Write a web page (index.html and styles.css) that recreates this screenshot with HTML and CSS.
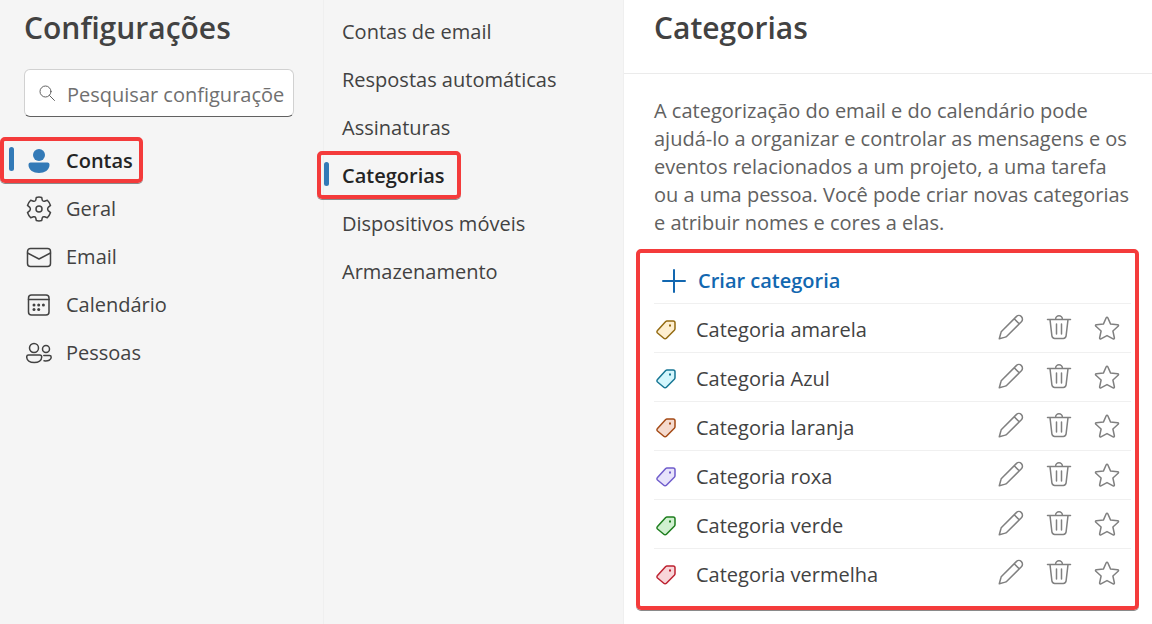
FILE: index.html
```
<!DOCTYPE html>
<html lang="pt-BR">
<head>
    <meta charset="utf-8">
    <meta name="viewport" content="width=device-width, initial-scale=1">
    <title>Configurações</title>
    <link rel="stylesheet" href="styles.css">
</head>
<body>
    <svg class="sprite" aria-hidden="true">
        <symbol id="tag" viewBox="0 0 20 20">
            <path d="M11 1h6.200a1.800 1.800 0 0 1 1.800 1.800v5.700c0 .7-.3 1.300-.7 1.800l-7.900 8a1.800 1.800 0 0 1-2.600 0l-6.300-5.300a1.700 1.700 0 0 1 0-2.500l8.200-8.900c.3-.4.800-.6 1.300-.6z"/>
            <rect class="dot" x="13" y="4.500" width="2" height="2"/>
        </symbol>
        <symbol id="pencil" viewBox="0 0 26 26">
            <path d="M18.300 2.600a3.600 3.600 0 0 1 5.100 5.100L8.800 22.300c-.4.400-.9.700-1.500.8L1.300 24.700l1.600-6c.1-.5.400-1 .8-1.400zM16.200 4.800l5 5"/>
        </symbol>
        <symbol id="trash" viewBox="0 0 26 26">
            <path d="M1.500 5.500h23M9.600 5.200a3.400 3.400 0 0 1 6.800 0M4 5.700l1.900 16.200a2.900 2.900 0 0 0 2.800 2.500h8.600a2.900 2.900 0 0 0 2.800-2.500L22 5.700M10.500 10v10M15.500 10v10"/>
        </symbol>
        <symbol id="star" viewBox="0 0 26 26">
            <path d="M12.200 2.800a.9.9 0 0 1 1.600 0l2.800 6.300 7 .7a.8.8 0 0 1 .5 1.500l-5.200 4.700 1.500 7a.9.9 0 0 1-1.300.9L13 20.600l-6.100 3.300a.9.9 0 0 1-1.300-.9l1.500-7-5.200-4.700a.8.8 0 0 1 .5-1.500l7-.7z"/>
        </symbol>
    </svg>

    <div class="settings">
        <aside class="sidebar">
            <h1>Configurações</h1>
            <label class="search">
                <svg viewBox="0 0 16 16"><circle cx="6.500" cy="6.500" r="5.500"/><path d="M10.500 10.500l5 5"/></svg>
                <input type="text" aria-label="Pesquisar configurações" placeholder="Pesquisar configuraçõe">
            </label>
            <nav class="menu">
                <a href="#contas" class="active">
                    <svg class="person" viewBox="0 0 26 26"><circle cx="13" cy="7" r="6"/><path d="M4.500 14.500h17a2 2 0 0 1 2 2v.5c0 5-5 8-10.500 8S2.500 22 2.500 17v-.5a2 2 0 0 1 2-2z"/></svg>
                    Contas
                </a>
                <a href="#geral">
                    <svg viewBox="0 0 26 26"><circle cx="13" cy="13" r="3"/><path d="M10.300 1.500Q13 .7 15.700 1.500L16.300 4.300Q16.900 5.600 18.500 5.200L21.300 4.200Q23.500 6.300 24.500 9.400L22.200 11.400Q21.100 13 22.200 14.600L24.500 16.600Q23.500 19.700 21.300 21.800L18.500 20.800Q16.900 20.400 16.300 21.700L15.700 24.500Q13 25.300 10.300 24.500L9.700 21.700Q9.100 20.400 7.500 20.800L4.700 21.800Q2.500 19.700 1.500 16.600L3.800 14.600Q4.900 13 3.800 11.400L1.500 9.400Q2.500 6.300 4.700 4.200L7.500 5.200Q9.100 5.600 9.700 4.300z"/></svg>
                    Geral
                </a>
                <a href="#email">
                    <svg viewBox="0 0 26 26"><rect x="1.500" y="4.500" width="23" height="18" rx="3"/><path d="M1.500 9L13 15l11.500-6"/></svg>
                    Email
                </a>
                <a href="#calendario">
                    <svg viewBox="0 0 26 26"><rect x="2.500" y="3" width="20.500" height="20" rx="3"/><path d="M2.500 7.500H23"/><g class="dots"><circle cx="8" cy="13" r="1.500"/><circle cx="12.700" cy="13" r="1.500"/><circle cx="17.400" cy="13" r="1.500"/><circle cx="8" cy="17.500" r="1.500"/><circle cx="12.700" cy="17.500" r="1.500"/></g></svg>
                    Calendário
                </a>
                <a href="#pessoas">
                    <svg viewBox="0 0 26 26"><circle cx="8" cy="8" r="4.500"/><circle cx="20" cy="9" r="3.500"/><path d="M2.500 15h11.200a2 2 0 0 1 2 2c0 3.500-3.200 5.500-7.500 5.500S.700 20.500.7 17a2 2 0 0 1 1.800-2zM17.800 15.500h5.700a1.700 1.700 0 0 1 1.700 1.700c0 2.800-3 4-7.200 3.600"/></svg>
                    Pessoas
                </a>
            </nav>
        </aside>

        <nav class="menu submenu">
            <a href="#contas-email">Contas de email</a>
            <a href="#respostas">Respostas automáticas</a>
            <a href="#assinaturas">Assinaturas</a>
            <a href="#categorias" class="active">Categorias</a>
            <a href="#dispositivos">Dispositivos móveis</a>
            <a href="#armazenamento">Armazenamento</a>
        </nav>

        <main>
            <header>
                <h2>Categorias</h2>
            </header>
            <p class="intro">A categorização do email e do calendário pode ajudá-lo a organizar e controlar as mensagens e os eventos relacionados a um projeto, a uma tarefa<br>ou a uma pessoa. Você pode criar novas categorias e atribuir nomes e cores a elas.</p>
            <section class="categories">
                <button class="create">
                    <svg viewBox="0 0 24 24"><path d="M12 1v22M1 12h22"/></svg>
                    Criar categoria
                </button>
                <ul>
                    <li>
                        <svg class="tag yellow"><use href="#tag"/></svg>
                        <span>Categoria amarela</span>
                        <button aria-label="Editar"><svg><use href="#pencil"/></svg></button>
                        <button aria-label="Excluir"><svg><use href="#trash"/></svg></button>
                        <button aria-label="Favorito" class="fav"><svg><use href="#star"/></svg></button>
                    </li>
                    <li>
                        <svg class="tag blue"><use href="#tag"/></svg>
                        <span>Categoria Azul</span>
                        <button aria-label="Editar"><svg><use href="#pencil"/></svg></button>
                        <button aria-label="Excluir"><svg><use href="#trash"/></svg></button>
                        <button aria-label="Favorito" class="fav"><svg><use href="#star"/></svg></button>
                    </li>
                    <li>
                        <svg class="tag orange"><use href="#tag"/></svg>
                        <span>Categoria laranja</span>
                        <button aria-label="Editar"><svg><use href="#pencil"/></svg></button>
                        <button aria-label="Excluir"><svg><use href="#trash"/></svg></button>
                        <button aria-label="Favorito" class="fav"><svg><use href="#star"/></svg></button>
                    </li>
                    <li>
                        <svg class="tag purple"><use href="#tag"/></svg>
                        <span>Categoria roxa</span>
                        <button aria-label="Editar"><svg><use href="#pencil"/></svg></button>
                        <button aria-label="Excluir"><svg><use href="#trash"/></svg></button>
                        <button aria-label="Favorito" class="fav"><svg><use href="#star"/></svg></button>
                    </li>
                    <li>
                        <svg class="tag green"><use href="#tag"/></svg>
                        <span>Categoria verde</span>
                        <button aria-label="Editar"><svg><use href="#pencil"/></svg></button>
                        <button aria-label="Excluir"><svg><use href="#trash"/></svg></button>
                        <button aria-label="Favorito" class="fav"><svg><use href="#star"/></svg></button>
                    </li>
                    <li>
                        <svg class="tag red"><use href="#tag"/></svg>
                        <span>Categoria vermelha</span>
                        <button aria-label="Editar"><svg><use href="#pencil"/></svg></button>
                        <button aria-label="Excluir"><svg><use href="#trash"/></svg></button>
                        <button aria-label="Favorito" class="fav"><svg><use href="#star"/></svg></button>
                    </li>
                </ul>
            </section>
        </main>
    </div>
</body>
</html>
```
FILE: styles.css
```
* {
    box-sizing: border-box;
}
body {
    margin: 0;
    font-family: "Open Sans", "Noto Sans", sans-serif;
    font-size: 20px;
    line-height: 28px;
    color: #424242;
    background: #fff;
}
h1, h2 {
    margin: 0;
    font-size: 30px;
    line-height: 40px;
    font-weight: 600;
}
svg {
    flex: none;
    fill: none;
    stroke: currentColor;
    stroke-width: 1.5;
    stroke-linejoin: round;
    stroke-linecap: round;
}
.sprite {
    display: none;
}
.settings {
    display: grid;
    grid-template-columns: 324px 300px 1fr;
    min-height: 100vh;
}

/* left column */
.sidebar {
    padding-top: 8px;
    background: #f5f5f5;
    border-right: 1px solid #efefef;
}
.sidebar h1 {
    margin-left: 24px;
}
.search {
    display: flex;
    align-items: center;
    gap: 12px;
    height: 48px;
    margin: 21px 29px 20px 24px;
    padding: 0 8px 0 14px;
    background: #fff;
    border: 1px solid #d1d1d1;
    border-bottom-color: #616161;
    border-radius: 6px;
}
.search svg {
    width: 16px;
    height: 16px;
    color: #616161;
    stroke-width: 1;
}
.search input {
    flex: 1;
    min-width: 0;
    padding: 3px 0 0;
    border: 0;
    outline: 0;
    background: none;
    font: inherit;
}
.search input::placeholder {
    color: #707070;
}
.menu a {
    position: relative;
    display: flex;
    align-items: center;
    gap: 14px;
    height: 48px;
    padding-left: 26px;
    color: #424242;
    text-decoration: none;
}
.menu svg {
    width: 26px;
    height: 26px;
}
.menu .active {
    width: fit-content;
    color: #242424;
    font-weight: 600;
}
.menu .active::before {
    content: "";
    position: absolute;
    left: 9px;
    top: 10px;
    width: 5px;
    height: 24px;
    border-radius: 3px;
    background: #337ab7;
}
.menu .active::after {
    content: "";
    position: absolute;
    inset: 0 -10px 2px 0;
    border: 4px solid #f43b3b;
    border-radius: 5px;
    box-shadow: 0 1px 0 #8a8a8a;
}
.menu .person {
    fill: #337ab7;
    stroke: none;
}
.dots {
    fill: currentColor;
    stroke: none;
}

/* middle column */
.submenu {
    padding-top: 8px;
    background: #f5f5f5;
    border-right: 1px solid #efefef;
}
.submenu a {
    padding-left: 18px;
}
.submenu .active::before {
    left: 0;
}
.submenu .active::after {
    inset: -1px -16px 1px -7px;
}

/* content */
header {
    padding: 8px 30px 25px;
    border-bottom: 1px solid #ebebeb;
}
.intro {
    margin: 23px 12px 12px 30px;
    color: #616161;
}
.categories {
    margin: 0 13px 14px 12px;
    padding: 4px 4px 9px 14px;
    border: 4px solid #f43b3b;
    border-radius: 5px;
    box-shadow: 0 1px 0 #8a8a8a;
}
.categories button {
    display: flex;
    align-items: center;
    justify-content: center;
    width: 48px;
    height: 48px;
    padding: 0 0 2px;
    border: 0;
    background: none;
    font: inherit;
    color: #808080;
    cursor: pointer;
}
.categories button svg {
    width: 26px;
    height: 26px;
}
.categories .create {
    width: auto;
    height: 46px;
    gap: 12px;
    padding: 2px 8px 0;
    color: #1267b0;
    font-weight: 600;
}
.categories .create svg {
    width: 24px;
    height: 24px;
    stroke-width: 2;
}
.categories ul {
    margin: 0;
    padding: 0;
    list-style: none;
}
.categories li {
    display: flex;
    align-items: center;
    height: 49px;
    border-top: 1px solid #f0f0f0;
}
.categories li span {
    flex: 1;
    padding: 3px 0 0 20px;
}
.categories .fav {
    padding-bottom: 0;
}
.tag {
    width: 20px;
    height: 20px;
    margin: 4px 0 0 2px;
}
.dot {
    fill: currentColor;
    stroke: none;
}
.yellow {
    color: #946b12;
    fill: #feefd0;
}
.blue {
    color: #167694;
    fill: #d3f6fd;
}
.orange {
    color: #a44a16;
    fill: #f5dace;
}
.purple {
    color: #6f5ccb;
    fill: #e7e3fb;
}
.green {
    color: #1e7e1e;
    fill: #d0f0d0;
}
.red {
    color: #bd2230;
    fill: #f8d5d9;
}
```
